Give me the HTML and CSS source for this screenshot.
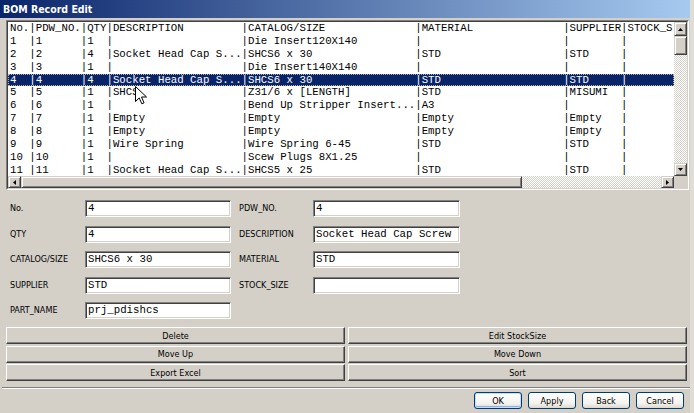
FILE: index.html
```html
<!DOCTYPE html>
<html lang="en">
<head>
<meta charset="utf-8">
<title>BOM Record Edit</title>
<link rel="stylesheet" href="styles.css">
</head>
<body>
<div class="window">
  <div class="titlebar">BOM Record Edit</div>
  <div class="client">
    <div class="listbox">
      <div class="listbox-inner">
        <div class="list-main">
          <ul class="rows">
            <li class="row"><span class="c3">No.</span>|<span class="c7">PDW_NO.</span>|<span class="c3">QTY</span>|<span class="c20">DESCRIPTION</span>|<span class="c26">CATALOG/SIZE</span>|<span class="c22">MATERIAL</span>|<span class="c8">SUPPLIER</span>|<span>STOCK_S</span></li>
            <li class="row"><span class="c3">1</span>|<span class="c7">1</span>|<span class="c3">1</span>|<span class="c20"></span>|<span class="c26">Die Insert120X140</span>|<span class="c22"></span>|<span class="c8"></span>|</li>
            <li class="row"><span class="c3">2</span>|<span class="c7">2</span>|<span class="c3">4</span>|<span class="c20">Socket Head Cap S...</span>|<span class="c26">SHCS6 x 30</span>|<span class="c22">STD</span>|<span class="c8">STD</span>|</li>
            <li class="row"><span class="c3">3</span>|<span class="c7">3</span>|<span class="c3">1</span>|<span class="c20"></span>|<span class="c26">Die Insert140X140</span>|<span class="c22"></span>|<span class="c8"></span>|</li>
            <li class="row selected"><span class="c3">4</span>|<span class="c7">4</span>|<span class="c3">4</span>|<span class="c20">Socket Head Cap S...</span>|<span class="c26">SHCS6 x 30</span>|<span class="c22">STD</span>|<span class="c8">STD</span>|</li>
            <li class="row"><span class="c3">5</span>|<span class="c7">5</span>|<span class="c3">1</span>|<span class="c20">SHCS</span>|<span class="c26">Z31/6 x [LENGTH]</span>|<span class="c22">STD</span>|<span class="c8">MISUMI</span>|</li>
            <li class="row"><span class="c3">6</span>|<span class="c7">6</span>|<span class="c3">1</span>|<span class="c20"></span>|<span class="c26">Bend Up Stripper Insert...</span>|<span class="c22">A3</span>|<span class="c8"></span>|</li>
            <li class="row"><span class="c3">7</span>|<span class="c7">7</span>|<span class="c3">1</span>|<span class="c20">Empty</span>|<span class="c26">Empty</span>|<span class="c22">Empty</span>|<span class="c8">Empty</span>|</li>
            <li class="row"><span class="c3">8</span>|<span class="c7">8</span>|<span class="c3">1</span>|<span class="c20">Empty</span>|<span class="c26">Empty</span>|<span class="c22">Empty</span>|<span class="c8">Empty</span>|</li>
            <li class="row"><span class="c3">9</span>|<span class="c7">9</span>|<span class="c3">1</span>|<span class="c20">Wire Spring</span>|<span class="c26">Wire Spring 6-45</span>|<span class="c22">STD</span>|<span class="c8">STD</span>|</li>
            <li class="row"><span class="c3">10</span>|<span class="c7">10</span>|<span class="c3">1</span>|<span class="c20"></span>|<span class="c26">Scew Plugs 8X1.25</span>|<span class="c22"></span>|<span class="c8"></span>|</li>
            <li class="row"><span class="c3">11</span>|<span class="c7">11</span>|<span class="c3">1</span>|<span class="c20">Socket Head Cap S...</span>|<span class="c26">SHCS5 x 25</span>|<span class="c22">STD</span>|<span class="c8">STD</span>|</li>
          </ul>
          <div class="vscroll">
            <div class="sb-btn sb-up"><svg width="5" height="3" viewBox="0 0 5 3"><polygon points="2.5,0 5,3 0,3" fill="#000"/></svg></div>
            <div class="sb-thumb sb-vthumb"></div>
            <div class="sb-track"></div>
            <div class="sb-btn sb-down"><svg width="5" height="3" viewBox="0 0 5 3"><polygon points="0,0 5,0 2.5,3" fill="#000"/></svg></div>
          </div>
        </div>
        <div class="hscroll">
          <div class="sb-btn sb-left"><svg width="3" height="5" viewBox="0 0 3 5"><polygon points="3,0 3,5 0,2.5" fill="#000"/></svg></div>
          <div class="sb-thumb sb-hthumb"></div>
          <div class="sb-track"></div>
          <div class="sb-btn sb-right"><svg width="3" height="5" viewBox="0 0 3 5"><polygon points="0,0 3,2.5 0,5" fill="#000"/></svg></div>
          <div class="sb-corner"></div>
        </div>
      </div>
    </div>

    <div class="form">
      <div class="label">No.</div><div class="field">4</div>
      <div class="label right">PDW_NO.</div><div class="field">4</div>
      <div class="label">QTY</div><div class="field">4</div>
      <div class="label right">DESCRIPTION</div><div class="field">Socket Head Cap Screw</div>
      <div class="label">CATALOG/SIZE</div><div class="field">SHCS6 x 30</div>
      <div class="label right">MATERIAL</div><div class="field">STD</div>
      <div class="label">SUPPLIER</div><div class="field">STD</div>
      <div class="label right">STOCK_SIZE</div><div class="field"></div>
      <div class="label">PART_NAME</div><div class="field">prj_pdishcs</div>
    </div>

    <div class="actions">
      <button class="btn">Delete</button>
      <button class="btn">Edit StockSize</button>
      <button class="btn">Move Up</button>
      <button class="btn">Move Down</button>
      <button class="btn">Export Excel</button>
      <button class="btn">Sort</button>
    </div>

    <div class="separator"></div>

    <div class="dialog-buttons">
      <button class="dlg default">OK</button>
      <button class="dlg">Apply</button>
      <button class="dlg">Back</button>
      <button class="dlg">Cancel</button>
    </div>
  </div>

  <svg class="cursor" width="12" height="19" viewBox="0 0 12 19">
    <path d="M0.5,0.5 L0.5,15.5 L4.2,11.9 L6.8,17.8 L9,16.8 L6.5,11 L11.5,11 Z" fill="#fff" stroke="#000" stroke-width="1" stroke-linejoin="miter"/>
  </svg>
</div>
</body>
</html>
```

FILE: styles.css
```css
* { box-sizing: border-box; }

html, body {
  margin: 0;
  padding: 0;
}

body {
  width: 694px;
  height: 413px;
  overflow: hidden;
  background: #e0ddd6;
  font-family: "DejaVu Sans Condensed", "DejaVu Sans", sans-serif;
  font-stretch: condensed;
  font-size: 9px;
  color: #000;
}

.window {
  position: relative;
  width: 690px;
  height: 413px;
  background: #d4d0c8;
}

.titlebar {
  height: 18px;
  padding-left: 3px;
  background: linear-gradient(to right, #0a246a, #a6caf0);
  color: #fff;
  font-weight: bold;
  font-size: 10.5px;
  line-height: 18px;
}

.client {
  padding: 2px 1px 0 6px;
}

/* ---------- list box ---------- */
.listbox {
  height: 170px;
  border: 1px solid;
  border-color: #808080 #fff #fff #808080;
}

.listbox-inner {
  height: 168px;
  border: 1px solid;
  border-color: #404040 #d4d0c8 #d4d0c8 #404040;
  display: flex;
  flex-direction: column;
}

.list-main {
  flex: 1;
  min-height: 0;
  display: flex;
}

.rows {
  flex: 1;
  min-width: 0;
  margin: 0;
  padding: 0;
  list-style: none;
  background: #fff;
  overflow: hidden;
  font-family: "Liberation Mono", "Courier New", monospace;
  font-size: 10.73px;
  line-height: 12.9px;
}

.row {
  white-space: pre;
  padding-left: 2px;
  height: 12.9px;
}

.row span { display: inline-block; vertical-align: top; }
.c3 { width: 3ch; }
.c7 { width: 7ch; }
.c8 { width: 8ch; }
.c20 { width: 20ch; }
.c22 { width: 22ch; }
.c26 { width: 26ch; }

.row.selected {
  background: #0a246a;
  color: #fff;
  outline: 1px dotted #b8b0a0;
  outline-offset: -1px;
}

/* ---------- scrollbars ---------- */
.vscroll {
  width: 13px;
  display: flex;
  flex-direction: column;
}

.sb-btn,
.sb-thumb {
  background: #d4d0c8;
  border: 1px solid;
  border-color: #d4d0c8 #404040 #404040 #d4d0c8;
  box-shadow: inset 1px 1px #fff, inset -1px -1px #808080;
}

.sb-btn {
  display: flex;
  align-items: center;
  justify-content: center;
}

.sb-btn svg { display: block; }

.sb-up { height: 14px; }
.sb-vthumb { height: 19px; }
.sb-down { height: 13px; }

.sb-track {
  flex: 1;
  background-color: #fff;
  background-image: conic-gradient(#d4d0c8 25%, #fff 0 50%, #d4d0c8 0 75%, #fff 0);
  background-size: 2px 2px;
}

.hscroll {
  height: 12px;
  display: flex;
}

.sb-left, .sb-right { width: 13px; }
.sb-hthumb { width: 501px; }
.sb-corner { width: 13px; background: #d4d0c8; }

/* ---------- form ---------- */
.form {
  display: grid;
  grid-template-columns: 75px 146px 82px 147px;
  row-gap: 8.5px;
  margin: 10px 0 0 4px;
}

.label {
  height: 17px;
  line-height: 17px;
  white-space: nowrap;
}

.label.right { padding-left: 8px; }

.field {
  height: 17px;
  padding-left: 2px;
  background: #fff;
  border: 1px solid;
  border-color: #808080 #fff #fff #808080;
  box-shadow: inset 1px 1px #404040, inset -1px -1px #d4d0c8;
  font-family: "Liberation Mono", "Courier New", monospace;
  font-size: 10.73px;
  line-height: 15px;
  white-space: pre;
  overflow: hidden;
}

/* ---------- action buttons ---------- */
.actions {
  display: grid;
  grid-template-columns: 1fr 1fr;
  column-gap: 3px;
  row-gap: 1.5px;
  width: 681px;
  margin-top: 8px;
}

.btn {
  height: 17px;
  margin: 0;
  padding: 0;
  background: #d4d0c8;
  border: 1px solid;
  border-color: #fff #404040 #404040 #fff;
  box-shadow: inset -1px -1px #808080;
  font: inherit;
  font-stretch: condensed;
  color: #000;
  text-align: center;
  line-height: 14px;
}

.separator {
  height: 2px;
  width: 688px;
  margin: 6px 0 0 -4px;
  border-top: 1px solid #808080;
  border-bottom: 1px solid #fff;
}

.dialog-buttons {
  display: flex;
  justify-content: flex-end;
  gap: 6px;
  margin: 3px 5px 0 0;
}

.dlg {
  width: 48px;
  height: 17px;
  margin: 0;
  padding: 0;
  border: 1px solid #003c74;
  border-radius: 3px;
  background: linear-gradient(#ffffff, #f3f2ee 70%, #dcd7cc);
  font: inherit;
  font-stretch: condensed;
  color: #000;
  line-height: 14px;
  text-align: center;
}

.dlg.default {
  box-shadow: inset 0 0 0 1px #c6dcfa, inset 0 -1px 0 1px #8cb0e8;
}

.cursor {
  position: absolute;
  left: 135px;
  top: 86px;
}
```
